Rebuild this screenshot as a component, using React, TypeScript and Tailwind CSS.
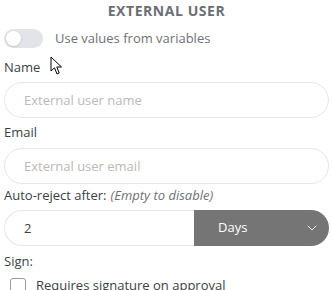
import React, { useState } from 'react';
import { ChevronDown } from 'lucide-react';

const font = { fontFamily: '"Open Sans", "Liberation Sans", sans-serif' };

const App: React.FC = () => {
  const [useVars, setUseVars] = useState(false);
  const [days, setDays] = useState('2');

  return (
    <div className="relative w-[332px] h-[290px] overflow-hidden bg-white pl-1 pr-[3px]" style={font}>
      {/* Title */}
      <div className="h-[20px] flex items-center justify-center text-[14px] font-bold tracking-[0.04em] text-[#6b6f75]">
        EXTERNAL USER
      </div>

      {/* Toggle */}
      <div className="mt-[9px] h-[19px] flex items-center">
        <button
          onClick={() => setUseVars(!useVars)}
          className="relative w-[39px] h-[19px] rounded-full bg-[#e3e4e8]"
        >
          <span className="absolute left-[2px] top-[2px] w-[15px] h-[15px] rounded-full bg-white shadow-sm" />
        </button>
        <span className="ml-[12px] text-[13px] text-[#6e7177]">Use values from variables</span>
      </div>

      {/* Name */}
      <div className="mt-[10px] mb-[4px] h-[20px] flex items-center text-[13px] text-[#3b3f45]">Name</div>
      <input
        placeholder="External user name"
        className="w-full h-[36px] rounded-full border border-[#e6e6e6] px-[19px] text-[13px] text-[#3b3f45] placeholder:text-[#bdb8b8] outline-none"
      />

      {/* Email */}
      <div className="mt-[5px] mb-[5px] h-[20px] flex items-center text-[13px] text-[#3b3f45]">Email</div>
      <input
        placeholder="External user email"
        className="w-full h-[36px] rounded-full border border-[#e6e6e6] px-[19px] text-[13px] text-[#3b3f45] placeholder:text-[#bdb8b8] outline-none"
      />

      {/* Auto-reject */}
      <div className="mt-[2px] mb-[4px] h-[20px] flex items-center text-[13px] text-[#3b3f45]">
        Auto-reject after:<span className="ml-1 italic text-[#6e7177]">(Empty to disable)</span>
      </div>
      <div className="flex h-[36px] w-full">
        <input
          value={days}
          onChange={(e) => setDays(e.target.value)}
          className="w-[190px] h-full rounded-l-full border border-r-0 border-[#e6e6e6] pl-[19px] text-[13px] text-[#3b3f45] outline-none"
        />
        <div className="flex-1 h-full rounded-r-full bg-[#757575] flex items-center pl-[24px] pr-[9px] text-[13px] text-white">
          <span className="flex-1">Days</span>
          <ChevronDown className="w-[16px] h-[16px] text-[#e8e8e8]" strokeWidth={1.5} />
        </div>
      </div>

      {/* Sign */}
      <div className="mt-[6px] mb-[4px] h-[20px] flex items-center text-[13px] text-[#3b3f45]">Sign:</div>
      <label className="flex items-center pl-[6px]">
        <span className="w-[16px] h-[16px] rounded-[3px] border border-[#9a9a9a] bg-white" />
        <span className="ml-[10px] text-[13px] text-[#3b3f45]">Requires signature on approval</span>
      </label>

      {/* Mouse cursor */}
      <svg className="absolute left-[50px] top-[56px]" width="14" height="20" viewBox="0 0 14 20">
        <path d="M1 1 L1 15 L4.5 11.8 L7 18 L9.2 17 L6.8 11 L11.5 11 Z" fill="#fff" stroke="#000" strokeWidth="1" strokeLinejoin="round" />
      </svg>
    </div>
  );
};

export default App;
